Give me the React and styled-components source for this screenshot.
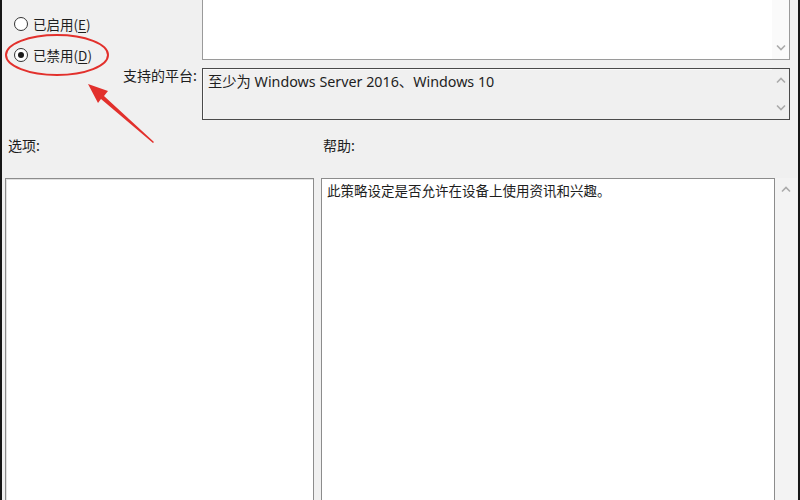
import React from "react";
import styled, { createGlobalStyle } from "styled-components";

// Group policy setting dialog (cropped), with a red annotation over the "disabled" radio

const Global = createGlobalStyle`
  html, body {
    margin: 0;
    padding: 0;
    background: #f0f0f0;
  }
  body {
    font-family: "Noto Sans", "Noto Sans CJK SC", sans-serif;
    color: #1e1e1e;
  }
`;

const Window = styled.div`
  position: relative;
  width: 800px;
  height: 500px;
  box-sizing: border-box;
  overflow: hidden;
  background: #f0f0f0;
  border-left: 2px solid #161616;
  border-right: 2px solid #161616;
  font-size: 13.5px;
`;

const TopGrid = styled.div`
  display: grid;
  grid-template-columns: 200px 588px;
  grid-template-rows: 60px 52px;
  row-gap: 8px;
`;

const RadioGroup = styled.div`
  display: flex;
  flex-direction: column;
  gap: 15px;
  padding: 16px 0 0 12px;
`;

const RadioRow = styled.label`
  display: flex;
  align-items: center;
  gap: 5px;
  height: 16px;
  line-height: 16px;
  font-family: "Noto Sans CJK SC", sans-serif;
`;

const RadioCircle = styled.span`
  width: 12px;
  height: 12px;
  border: 1px solid #333;
  border-radius: 50%;
  background: #fff;
  display: flex;
  align-items: center;
  justify-content: center;
  &::after {
    content: "";
    width: 6px;
    height: 6px;
    border-radius: 50%;
    background: ${({ checked }) => (checked ? "#1a1a1a" : "transparent")};
  }
`;

const Mnemonic = styled.span`
  text-decoration: underline;
  text-underline-offset: 2px;
`;

const CommentBox = styled.div`
  display: flex;
  justify-content: flex-end;
  background: #fff;
  border: 1px solid #9a9a9a;
  border-top: none;
`;

const ScrollCol = styled.div`
  width: ${({ w }) => w || 17}px;
  display: flex;
  flex-direction: column;
  justify-content: ${({ align }) => align || "space-between"};
  align-items: center;
  padding: 8px 0;
  background: ${({ bg }) => bg || "#fafafa"};
`;

const FieldLabel = styled.div`
  text-align: right;
  padding-right: 5px;
  margin-top: -2px;
  line-height: 18px;
  font-size: 14px;
  font-family: "Noto Sans CJK SC", sans-serif;
`;

const PlatformBox = styled.div`
  display: flex;
  border: 1px solid #4a4a4a;
  box-shadow: inset 1px 1px 0 #fafafa;
  background: #f0f0f0;
`;

const PlatformText = styled.div`
  flex: 1;
  padding: 4px 0 0 5px;
  line-height: 18px;
  font-size: 14.3px;
`;

const SectionGrid = styled.div`
  display: grid;
  grid-template-columns: 309px 476px;
  column-gap: 7px;
  padding-left: 3px;
  margin-top: ${({ top }) => top}px;
`;

const SectionLabel = styled.div`
  line-height: 18px;
  font-size: 14px;
  padding-left: ${({ inset }) => inset}px;
  font-family: "Noto Sans CJK SC", sans-serif;
`;

const OptionsBox = styled.div`
  height: 340px;
  background: #fff;
  border: 1px solid #8c8c8c;
  box-shadow: inset 1px 1px 0 #e2e2e2;
`;

const HelpWrap = styled.div`
  display: flex;
  height: 340px;
`;

const HelpBox = styled.div`
  flex: 1;
  background: #fff;
  border: 1px solid #8c8c8c;
  padding: 2px 0 0 5px;
  line-height: 18px;
  font-family: "Noto Sans CJK SC", sans-serif;
`;

const Overlay = styled.svg`
  position: absolute;
  left: 0;
  top: 0;
  pointer-events: none;
`;

const Chevron = ({ up }) => (
  <svg width="10" height="7" viewBox="0 0 10 7">
    <polyline
      points={up ? "1,5.5 5,1.5 9,5.5" : "1,1.5 5,5.5 9,1.5"}
      fill="none"
      stroke="#ababab"
      strokeWidth="1.6"
    />
  </svg>
);

const App = () => {
  return (
    <>
      <Global />
      <Window>
        <TopGrid>
          <RadioGroup>
            <RadioRow>
              <RadioCircle />
              <span>
                已启用(<Mnemonic>E</Mnemonic>)
              </span>
            </RadioRow>
            <RadioRow>
              <RadioCircle checked />
              <span>
                已禁用(<Mnemonic>D</Mnemonic>)
              </span>
            </RadioRow>
          </RadioGroup>
          <CommentBox>
            <ScrollCol align="flex-end">
              <Chevron />
            </ScrollCol>
          </CommentBox>
          <FieldLabel>支持的平台:</FieldLabel>
          <PlatformBox>
            <PlatformText>至少为 Windows Server 2016、Windows 10</PlatformText>
            <ScrollCol bg="#f0f0f0">
              <Chevron up />
              <Chevron />
            </ScrollCol>
          </PlatformBox>
        </TopGrid>

        <SectionGrid top={16}>
          <SectionLabel inset={3}>选项:</SectionLabel>
          <SectionLabel inset={2}>帮助:</SectionLabel>
        </SectionGrid>

        <SectionGrid top={24}>
          <OptionsBox />
          <HelpWrap>
            <HelpBox>此策略设定是否允许在设备上使用资讯和兴趣。</HelpBox>
            <ScrollCol w={22} align="flex-start" bg="#f3f3f3">
              <Chevron up />
            </ScrollCol>
          </HelpWrap>
        </SectionGrid>

        <Overlay width="800" height="500">
          <ellipse cx="55" cy="55" rx="51" ry="20" fill="none" stroke="#e2302c" strokeWidth="2" />
          <polygon
            points="86,84 106,91 102,96 152,142 151,143 99,99 96,103"
            fill="#e2302c"
          />
        </Overlay>
      </Window>
    </>
  );
};

export default App;
